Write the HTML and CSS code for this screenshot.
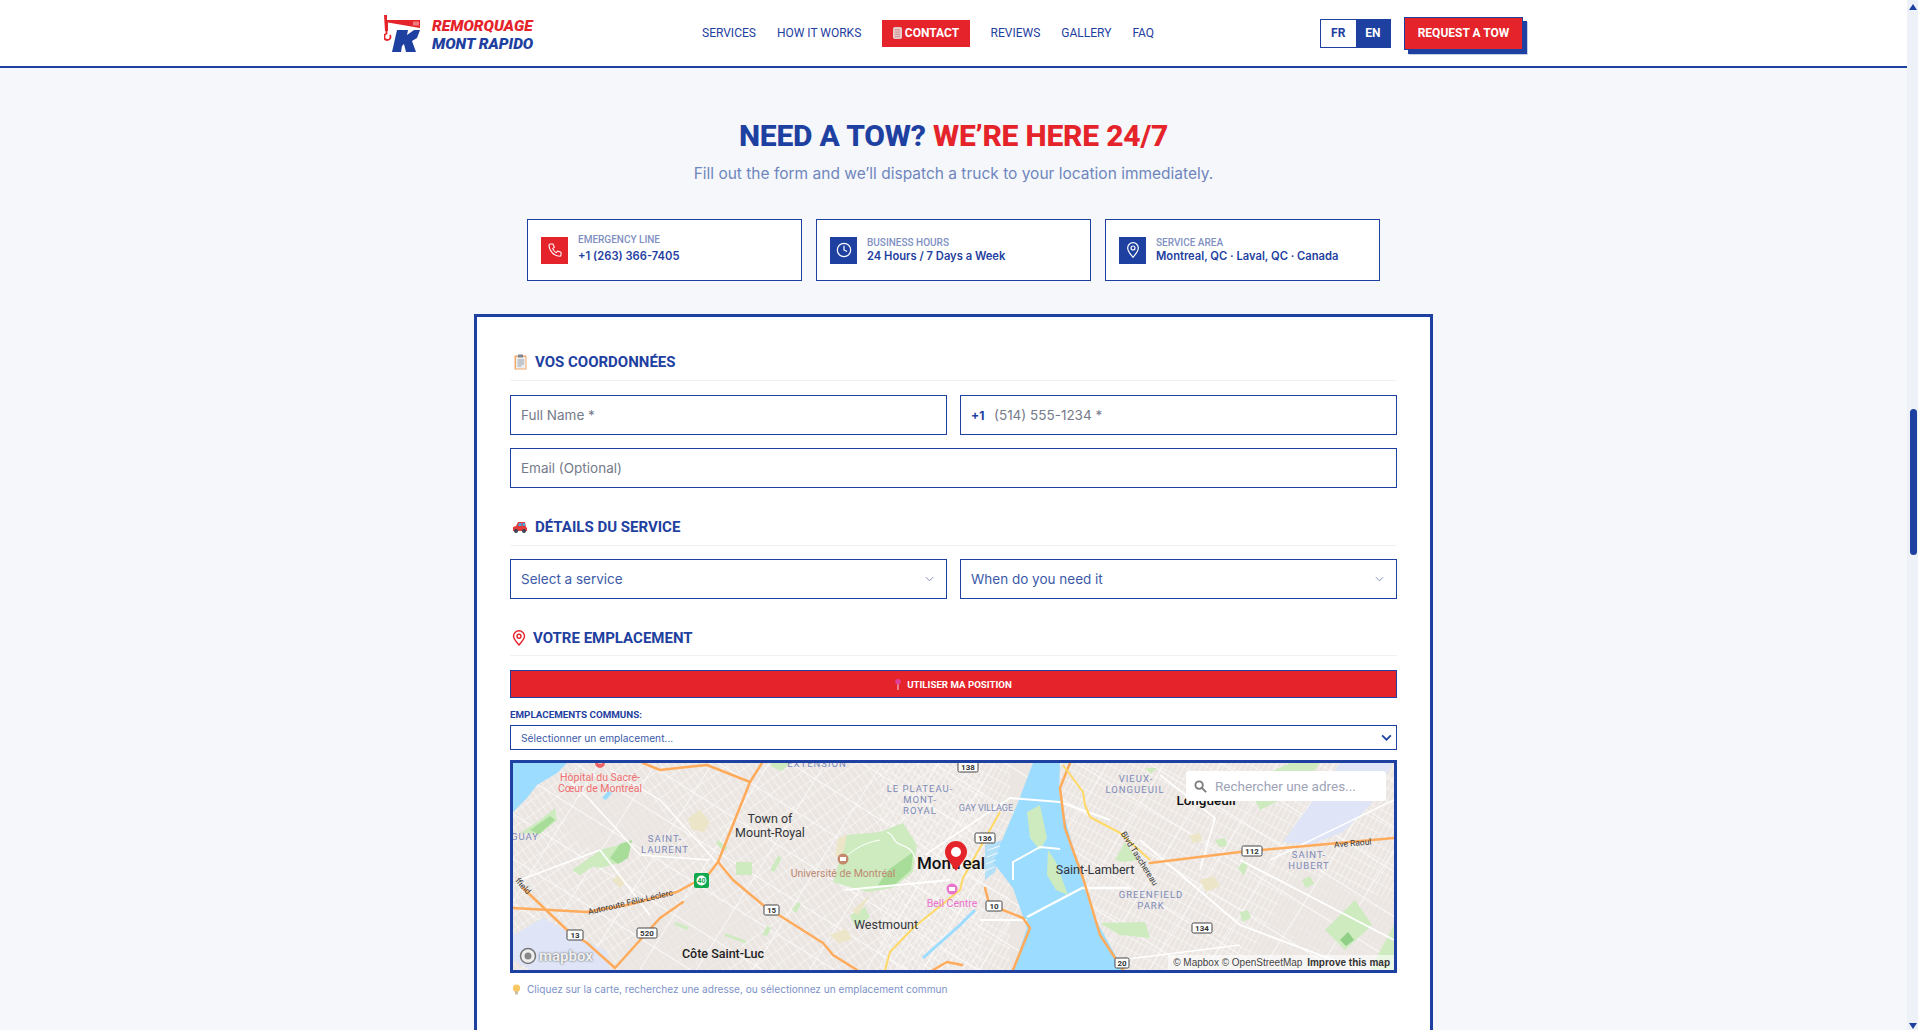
FILE: index.html
```html
<!DOCTYPE html>
<html lang="en">
<head>
    <meta charset="UTF-8">
    <title>Remorquage Mont Rapido</title>
    <link rel="stylesheet" href="styles.css">
</head>
<body>
<div class="page">
    <header class="header">
        <a class="logo">
            <svg class="logo-mark" viewBox="0 0 36 37">
                <path d="M0 0h3v5h33v8L4 7.500V16H1z" fill="#e5232a"/>
                <path d="M2.500 16v2.500c-3 1-3 6.500 .5 6.500s4-3 3-5" fill="none" stroke="#e5232a" stroke-width="1.800"/>
                <path d="M13 15H24L23 20L30 15H36L33 23L28 26L32 37H22L20 29L18 31L17 37H8z" fill="#1e40a0"/>
                <path d="M30 6.500v4M32 6.500v4M34 6.500v4" stroke="#fff" stroke-width="0.800"/>
            </svg>
            <span class="logo-text"><span class="logo-red">REMORQUAGE</span><span class="logo-blue">MONT RAPIDO</span></span>
        </a>
        <nav class="nav">
            <a>SERVICES</a>
            <a>HOW IT WORKS</a>
            <a class="nav-contact">
                <svg viewBox="0 0 10 13" width="9" height="12"><rect x="0.500" y="0.500" width="9" height="12" rx="1" fill="#f3c9c9" stroke="#ddd"/><path d="M2 3h6M2 5.500h6M2 8h6M2 10.500h6" stroke="#b88" stroke-width="1"/></svg>
                CONTACT
            </a>
            <a>REVIEWS</a>
            <a>GALLERY</a>
            <a>FAQ</a>
        </nav>
        <div class="lang">
            <span class="lang-fr">FR</span>
            <span class="lang-en">EN</span>
        </div>
        <a class="tow-btn">REQUEST A TOW</a>
    </header>

    <main class="main">
        <h1 class="title">NEED A TOW? <span>WE’RE HERE 24/7</span></h1>
        <p class="subtitle">Fill out the form and we’ll dispatch a truck to your location immediately.</p>

        <div class="info-row">
            <div class="info-card">
                <div class="info-icon red">
                    <svg viewBox="0 0 24 24" width="16" height="16" fill="none" stroke="#fff" stroke-width="1.600" stroke-linecap="round" stroke-linejoin="round"><path d="M5 3h4l2 5-2.500 2a12 12 0 0 0 5.500 6l2-2.500 5 2v4c0 1-1 2-2 2C11 21.500 3 13 3 5c0-1 1-2 2-2z"/></svg>
                </div>
                <div class="info-text info-text-high">
                    <span class="info-label">EMERGENCY LINE</span>
                    <span class="info-value">+1 (263) 366-7405</span>
                </div>
            </div>
            <div class="info-card">
                <div class="info-icon">
                    <svg viewBox="0 0 24 24" width="16" height="16" fill="none" stroke="#fff" stroke-width="1.800" stroke-linecap="round" stroke-linejoin="round"><circle cx="12" cy="12" r="10"/><path d="M12 6v6l4 2"/></svg>
                </div>
                <div class="info-text">
                    <span class="info-label">BUSINESS HOURS</span>
                    <span class="info-value">24 Hours / 7 Days a Week</span>
                </div>
            </div>
            <div class="info-card">
                <div class="info-icon">
                    <svg viewBox="0 0 24 24" width="16" height="16" fill="none" stroke="#fff" stroke-width="1.800" stroke-linejoin="round"><path d="M12 23c-4-5-8-9-8-14a8 8 0 0 1 16 0c0 5-4 9-8 14z"/><circle cx="12" cy="9" r="3"/></svg>
                </div>
                <div class="info-text">
                    <span class="info-label">SERVICE AREA</span>
                    <span class="info-value">Montreal, QC · Laval, QC · Canada</span>
                </div>
            </div>
        </div>

        <form class="form-card">
            <h2 class="section-head head-one">
                <svg class="head-icon" viewBox="0 0 13 16" width="13" height="16"><rect x="0.500" y="1.500" width="12" height="14" fill="#f3a868"/><rect x="2" y="3" width="9.500" height="11.500" fill="#eceef0"/><rect x="4" y="0.500" width="5" height="3" fill="#7d8590"/><path d="M3.500 6h6.500M3.500 8h6.500M3.500 10h6.500M3.500 12h4" stroke="#9aa1a8"/></svg>
                VOS COORDONNÉES
            </h2>
            <div class="row">
                <div class="field"><span class="ph">Full Name *</span></div>
                <div class="field"><span class="prefix">+1</span><span class="ph">(514) 555-1234 *</span></div>
            </div>
            <div class="field field-wide"><span class="ph">Email (Optional)</span></div>

            <h2 class="section-head head-two">
                <svg class="head-icon" viewBox="0 0 16 12" width="16" height="12"><path d="M1 6l3-1 2-4h7l1 5 1 1v3H1z" fill="#e03a3a"/><path d="M7 2h2.500v3H6zM10.500 2H13v3h-2.500z" fill="#4aa3df"/><circle cx="4" cy="10" r="2" fill="#39424e"/><circle cx="12" cy="10" r="2" fill="#39424e"/></svg>
                DÉTAILS DU SERVICE
            </h2>
            <div class="row">
                <div class="field field-select"><span class="val">Select a service</span><svg class="chev" viewBox="0 0 10 6" width="9" height="6"><path d="M1 1l4 4 4-4" fill="none" stroke="#6f80b0" stroke-width="1"/></svg></div>
                <div class="field field-select"><span class="val">When do you need it</span><svg class="chev" viewBox="0 0 10 6" width="9" height="6"><path d="M1 1l4 4 4-4" fill="none" stroke="#6f80b0" stroke-width="1"/></svg></div>
            </div>

            <h2 class="section-head head-three">
                <svg class="head-icon" viewBox="0 0 14 16" width="14" height="16" fill="none" stroke="#e5232a" stroke-width="1.400"><path d="M7 15C4 11.500 1.500 9 1.500 6.300a5.500 5.500 0 0 1 11 0C12.500 9 10 11.500 7 15z"/><circle cx="7" cy="6.200" r="2"/></svg>
                VOTRE EMPLACEMENT
            </h2>
            <button type="button" class="geo-btn">
                <svg viewBox="0 0 6 12" width="6" height="11"><path d="M3 5v7" stroke="#eeb4c8" stroke-width="1.400"/><circle cx="3" cy="3" r="3" fill="#e0409a"/></svg>
                UTILISER MA POSITION
            </button>
            <label class="common-label">EMPLACEMENTS COMMUNS:</label>
            <div class="common-select">
                <span>Sélectionner un emplacement...</span>
                <svg viewBox="0 0 12 8" width="11" height="7"><path d="M1 1.500l5 5 5-5" fill="none" stroke="#1e40a0" stroke-width="2"/></svg>
            </div>

            <div class="map">
                <svg class="map-art" viewBox="513 763 881 207" preserveAspectRatio="none">
                    <defs>
                        <pattern id="streetsA" width="6" height="12" patternUnits="userSpaceOnUse" patternTransform="rotate(-35)">
                            <path d="M0 0H6M0 0V12" stroke="#fff" stroke-width="0.900" fill="none"/>
                        </pattern>
                        <pattern id="streetsB" width="5" height="11" patternUnits="userSpaceOnUse" patternTransform="rotate(28)">
                            <path d="M0 0H5M0 0V11" stroke="#fff" stroke-width="0.900" fill="none"/>
                        </pattern>
                        <pattern id="arteries" width="48" height="38" patternUnits="userSpaceOnUse" patternTransform="rotate(32)">
                            <path d="M0 0H48M0 0V38" stroke="#fff" stroke-width="1.300" fill="none"/>
                        </pattern>
                    </defs>
                    <!-- land -->
                    <rect x="513" y="763" width="881" height="207" fill="#ebe6e2"/>
                    <rect x="513" y="763" width="470" height="207" fill="url(#streetsA)"/>
                    <rect x="1060" y="763" width="334" height="207" fill="url(#streetsB)"/>
                    <rect x="880" y="763" width="130" height="207" fill="url(#streetsB)"/>
                    <path d="M640 925L700 890L760 925L720 970H610zM560 800L640 790L680 830L620 860L570 840zM1300 870L1394 900V970H1240z" fill="#ebe6e2" opacity="0.600"/>
                    <rect x="513" y="763" width="881" height="207" fill="url(#arteries)"/>

                    <!-- airports -->
                    <path d="M513 960V935L543 918L607 952L610 970H530z" fill="#dfe5f6"/>
                    <path d="M1283 842L1340 763H1393L1370 805L1343 832L1310 845z" fill="#dfe5f6"/>

                    <!-- water -->
                    <g fill="#9bdcff">
                        <path d="M513 763H567L557 773L537 785L527 798L513 812z"/>
                        <path d="M1033 763H1060L1059 790L1066 822L1080 872L1093 915L1117 958L1124 970H1013L1027 928L1013 888L993 862L1003 838L1017 805z"/>
                        <path d="M985 845L1003 840L995 872L985 880z" opacity="0.700"/>
                        <path d="M1037 940l6 0 0 7-6 0z"/>
                        <path d="M602 798l6-7 4 2-6 7z"/>
                        <path d="M617 847h12v5h-12z"/>
                    </g>
                    <path d="M923 958L960 925L975 910" fill="none" stroke="#9bdcff" stroke-width="3"/>
                    <path d="M988 850l12-4M987 857l11-4M986 864l10-4M985 871l9-4" fill="none" stroke="#fff" stroke-width="0.800"/>

                    <!-- parks -->
                    <g fill="#cdebbf">
                        <path d="M833 882L847 835L880 832L903 823L917 845L913 872L893 888L867 892z"/>
                        <path d="M1027 812L1040 805L1047 838L1040 850L1030 838z"/>
                        <path d="M1048 850L1056 862L1068 895L1056 890L1047 875z"/>
                        <path d="M520 833L540 820L555 808L557 820L540 834z"/>
                        <path d="M585 865L600 850L630 842L622 862L600 868z"/>
                        <path d="M572 870L598 852L600 862L580 875z"/>
                        <path d="M1115 860L1125 842L1138 860L1125 862z"/>
                        <path d="M1100 923L1145 922L1150 938L1120 935z"/>
                        <path d="M1325 930L1355 900L1372 925L1345 950z"/>
                        <path d="M1370 970L1394 925V970z"/>
                        <path d="M1245 780L1275 770L1290 763H1320L1300 790L1260 810z"/>
                        <path d="M1215 840l10-2 2 8-8 1zM1238 868l6-8 4 4-4 12zM1302 880l8-4 4 8-8 4zM1240 912l8-2 3 8-9 4z"/>
                        <path d="M736 862h16v13h-16zM770 870l8-14 4 2-8 14zM792 910l6-8 3 2-5 9zM762 935l5-9 4 2-4 8zM725 933l22 8-2 2-20-7zM675 922l14 5-2 3-12-5z"/>
                        <path d="M718 840l10 8-4 3-8-7zM850 915l15-8 5 10-15 10zM866 882l20-6-4 10-10 6z"/>
                        <path d="M770 763h20l-8 8-10-4zM1145 768h12l-6 6z"/>
                    </g>
                    <g fill="#a7dd98">
                        <path d="M878 885L888 870L905 858L913 852L911 870L893 886z"/>
                        <path d="M610 858l10-14 12-4-4 18-10 6z"/>
                        <path d="M530 830l20-14 5 4-16 14z"/>
                        <path d="M1340 940l8-8 6 8-8 6z" fill="#8fcf86"/>
                    </g>
                    <g fill="#ece5c8">
                        <path d="M688 818l12-8 10 12-6 10-12-2zM612 880l8-6 6 8-6 6zM830 935l16-6 6 10-14 4zM1200 880l14-4 6 10-14 6zM870 895l-12 20-6-4zM1190 835l10-2 2 8-10 2zM838 838l9-3-4 20-8 2z"/>
                    </g>

                    <!-- mont-royal ridge -->
                    <path d="M887 832c8 3 4 8 12 12s14 2 18 22" fill="none" stroke="#fff" stroke-width="1.200"/>
                    <path d="M840 860c10-6 18-16 40-20" fill="none" stroke="#fff" stroke-width="1"/>

                    <!-- big white roads -->
                    <g fill="none" stroke="#fff" stroke-linejoin="round">
                        <path d="M1010 798L1060 802L1110 820" stroke-width="2"/>
                        <path d="M1013 880V862L1040 847L1060 849" stroke-width="2"/>
                        <path d="M1027 917L1082 888H1130" stroke-width="2.500"/>
                        <path d="M980 920H1027" stroke-width="2"/>
                        <path d="M925 855L1010 798" stroke-width="1.600"/>
                        <path d="M710 860L640 855L590 800L560 772" stroke-width="1.600"/>
                        <path d="M1140 840L1240 925L1360 970" stroke-width="1.800"/>
                        <path d="M1240 860L1394 940" stroke-width="1.800"/>
                        <path d="M1160 775L1215 818L1200 870" stroke-width="1.600"/>
                        <path d="M1270 860L1394 800" stroke-width="1.400"/>
                        <path d="M1120 960L1240 945" stroke-width="1.400"/>
                        <path d="M733 880L660 800L610 770" stroke-width="1.400"/>
                        <path d="M845 890L950 880" stroke-width="1.800"/>
                        <path d="M520 880L600 850L650 915" stroke-width="1.600"/>
                    </g>

                    <!-- highways -->
                    <g fill="none" stroke="#ffab5c" stroke-width="2.500" stroke-linejoin="round" stroke-linecap="round">
                        <path d="M643 763L660 770L687 767L707 765L750 782"/>
                        <path d="M762 763L750 782L718 862"/>
                        <path d="M513 908L587 912L627 905L677 892L708 875L718 862"/>
                        <path d="M718 862L733 880L763 905L823 943L833 955L857 970"/>
                        <path d="M523 888L567 930L587 943L615 968"/>
                        <path d="M615 968L660 918L683 902"/>
                        <path d="M1070 763L1060 788L1065 828L1083 878L1100 935L1123 970"/>
                        <path d="M1150 863L1240 852L1395 838"/>
                        <path d="M985 888L990 907L1003 910L1023 918L1030 928L1013 970"/>
                        <path d="M933 970L947 962L962 965"/>
                    </g>
                    <g fill="none" stroke="#ffd966" stroke-width="2" stroke-linejoin="round">
                        <path d="M1063 765L1083 792L1085 805L1090 817L1120 833L1150 860"/>
                        <path d="M1000 812L963 878L960 890L913 928L890 952L885 970"/>
                    </g>

                    <!-- place labels -->
                    <g font-family="Roboto, sans-serif" text-anchor="middle">
                        <g font-size="10.500" fill="#ef6f70">
                            <text x="600" y="781">Hôpital du Sacré-</text>
                            <text x="600" y="792">Cœur de Montréal</text>
                        </g>
                        <g font-size="9.500" fill="#7e8ab8" letter-spacing="1">
                            <text x="817" y="767">EXTENSION</text>
                            <text x="920" y="792">LE PLATEAU-</text>
                            <text x="920" y="803">MONT-</text>
                            <text x="920" y="814">ROYAL</text>
                            <text x="665" y="842">SAINT-</text>
                            <text x="665" y="853">LAURENT</text>
                            <text x="525" y="840">GUAY</text>
                            <text x="1136" y="782">VIEUX-</text>
                            <text x="1135" y="793">LONGUEUIL</text>
                            <text x="1151" y="898">GREENFIELD</text>
                            <text x="1151" y="909">PARK</text>
                            <text x="1309" y="858">SAINT-</text>
                            <text x="1309" y="869">HUBERT</text>
                        </g>
                        <text x="986" y="811" font-size="9" fill="#7e8ab8">GAY VILLAGE</text>
                        <g font-size="12.500" fill="#33363b">
                            <text x="770" y="823">Town of</text>
                            <text x="770" y="837">Mount-Royal</text>
                            <text x="886" y="929">Westmount</text>
                            <text x="1095" y="874">Saint-Lambert</text>
                        </g>
                        <text x="723" y="958" font-size="12.500" font-weight="500" fill="#222">Côte Saint-Luc</text>
                        <text x="1206" y="805" font-size="13.500" font-weight="500" fill="#111">Longueuil</text>
                        <text x="951" y="869" font-size="17" font-weight="500" fill="#111">Montreal</text>
                        <text x="843" y="877" font-size="10.500" fill="#bd8a72">Université de Montréal</text>
                        <text x="952" y="907" font-size="10.500" fill="#ec73cd">Bell Centre</text>
                        <g font-size="8.500" fill="#3a3a3a">
                            <text transform="translate(631 905) rotate(-13)">Autoroute Félix-Leclerc</text>
                            <text transform="translate(521 888) rotate(48)">ffield</text>
                            <text transform="translate(1137 860) rotate(58)">Blvd Taschereau</text>
                            <text transform="translate(1353 846) rotate(-5)">Ave Raoul</text>
                        </g>
                    </g>

                    <!-- poi dots -->
                    <circle cx="600" cy="763" r="5" fill="#ee6466"/>
                    <path d="M598 762h4v1.500h-4z" fill="#fff"/>
                    <circle cx="843" cy="859" r="5.500" fill="#c58a6d"/>
                    <path d="M840 857h6v4h-6z" fill="#fff"/>
                    <circle cx="952" cy="889" r="5.500" fill="#ea74cc"/>
                    <path d="M949 887h6v4h-6z" fill="#fff"/>

                    <!-- road shields -->
                    <g font-family="Roboto, sans-serif" font-size="8" font-weight="700" text-anchor="middle" fill="#333">
                        <g stroke="#444" fill="#fff" stroke-width="1">
                            <rect x="567" y="930" width="16" height="10" rx="1.500"/>
                            <rect x="637" y="928" width="20" height="10" rx="1.500"/>
                            <rect x="764" y="905" width="15" height="10" rx="1.500"/>
                            <rect x="958" y="762" width="20" height="10" rx="1.500"/>
                            <rect x="975" y="833" width="20" height="10" rx="1.500"/>
                            <rect x="986" y="901" width="16" height="10" rx="1.500"/>
                            <rect x="1192" y="923" width="20" height="10" rx="1.500"/>
                            <rect x="1242" y="846" width="20" height="10" rx="1.500"/>
                            <rect x="1115" y="958" width="14" height="10" rx="1.500"/>
                        </g>
                        <text x="575" y="938">13</text>
                        <text x="647" y="936">520</text>
                        <text x="771.500" y="913">15</text>
                        <text x="968" y="770">138</text>
                        <text x="985" y="841">136</text>
                        <text x="994" y="909">10</text>
                        <text x="1202" y="931">134</text>
                        <text x="1252" y="854">112</text>
                        <text x="1122" y="966">20</text>
                        <rect x="694" y="873" width="15" height="15" rx="2" fill="#12a84e"/>
                        <circle cx="701.500" cy="880.500" r="5" fill="#fff"/>
                        <text x="701.500" y="883" font-size="7" fill="#12a84e">40</text>
                    </g>
                </svg>

                <div class="map-search">
                    <svg viewBox="0 0 14 14" width="13" height="13" fill="none" stroke="#7b7b7b" stroke-width="2"><circle cx="5.500" cy="5.500" r="4"/><path d="M8.500 8.500L13 13"/></svg>
                    <span>Rechercher une adres...</span>
                </div>

                <svg class="map-pin" viewBox="0 0 22 30" width="22" height="30">
                    <path d="M11 30C6 22 0 17 0 11a11 11 0 0 1 22 0c0 6-6 11-11 19z" fill="#e5232a"/>
                    <circle cx="11" cy="11" r="5" fill="#fff"/>
                </svg>

                <div class="map-logo">
                    <svg viewBox="0 0 18 18" width="18" height="18"><circle cx="9" cy="9" r="7.500" fill="#eee" stroke="#777" stroke-width="1.500"/><circle cx="9" cy="9" r="3.500" fill="#888"/></svg>
                    <span>mapbox</span>
                </div>
                <div class="map-attrib">© Mapbox © OpenStreetMap <b>Improve this map</b></div>
            </div>

            <p class="map-hint">
                <svg viewBox="0 0 10 12" width="9" height="11"><circle cx="5" cy="4.500" r="4" fill="#f7c766"/><rect x="3.500" y="8" width="3" height="3.500" fill="#c8b79a"/></svg>
                Cliquez sur la carte, recherchez une adresse, ou sélectionnez un emplacement commun
            </p>
        </form>
    </main>
</div>
<div class="scrollbar">
    <span class="arrow-up"></span>
    <span class="thumb"></span>
    <span class="arrow-down"></span>
</div>
</body>
</html>
```

FILE: styles.css
```css
* {
    box-sizing: border-box;
}
html, body {
    margin: 0;
    height: 1030px;
    overflow: hidden;
}
body {
    display: flex;
    font-family: "Inter", sans-serif;
    background-color: #f5f7fb;
    color: #1e40a0;
}
.page {
    flex: 1;
    min-width: 0;
    height: 1030px;
    overflow: hidden;
}
.scrollbar {
    width: 11px;
    background-color: #eef1f7;
    display: flex;
    flex-direction: column;
    align-items: center;
    position: relative;
}
.arrow-up {
    margin-top: 4px;
    margin-left: 1px;
    border: 4px solid transparent;
    border-top: 0;
    border-bottom: 6px solid #1e40a0;
}
.arrow-down {
    position: absolute;
    bottom: 1px;
    left: 2px;
    border: 4px solid transparent;
    border-bottom: 0;
    border-top: 6px solid #1e40a0;
}
.thumb {
    position: absolute;
    top: 409px;
    left: 3px;
    width: 7px;
    height: 146px;
    background-color: #1e40a0;
    border-radius: 4px;
}

/* header */
.header {
    height: 68px;
    background-color: #fff;
    border-bottom: 2px solid #1e40a0;
    display: flex;
    align-items: center;
    padding-left: 384px;
}
.logo {
    display: flex;
    align-items: center;
    gap: 12px;
    width: 318px;
}
.logo-mark {
    width: 36px;
    height: 37px;
}
.logo-text {
    display: flex;
    flex-direction: column;
    margin-top: 3px;
    font-family: "Roboto", sans-serif;
    font-size: 15.5px;
    font-weight: 900;
    font-style: italic;
    line-height: 18px;
}
.logo-red {
    color: #e5232a;
}
.logo-blue {
    color: #1e40a0;
}
.nav {
    display: flex;
    align-items: center;
    gap: 21px;
    width: 618px;
    font-family: "Roboto", sans-serif;
    font-size: 12px;
    font-weight: 400;
}
.nav-contact {
    display: flex;
    align-items: center;
    gap: 3px;
    height: 27px;
    padding: 0 10.5px;
    background-color: #e5232a;
    color: #fff;
    font-weight: 700;
}
.lang {
    display: flex;
    width: 71px;
    height: 29px;
    border: 1px solid #1e40a0;
    font-family: "Roboto", sans-serif;
    font-size: 12px;
    font-weight: 700;
}
.lang span {
    flex: 1;
    display: flex;
    align-items: center;
    justify-content: center;
}
.lang-en {
    background-color: #1e40a0;
    color: #fff;
}
.tow-btn {
    margin-left: 13px;
    width: 119px;
    height: 33px;
    display: flex;
    align-items: center;
    justify-content: center;
    background-color: #e5232a;
    border: 1px solid #1e40a0;
    box-shadow: 4px 4px 0 #1e40a0, 5px 5px 0 #c5cfe6;
    color: #fff;
    font-family: "Roboto", sans-serif;
    font-size: 12px;
    font-weight: 700;
}

/* main */
.main {
    display: flex;
    flex-direction: column;
    align-items: center;
}
.title {
    margin: 40px 0 0;
    font-family: "Roboto", sans-serif;
    font-size: 30px;
    line-height: 56px;
    font-weight: 800;
    letter-spacing: -0.2px;
    color: #1e40a0;
}
.title span {
    color: #e5232a;
}
.subtitle {
    margin: 0;
    font-size: 15.5px;
    line-height: 20px;
    color: #6f86bd;
}
.info-row {
    display: flex;
    gap: 14px;
    margin-top: 35px;
}
.info-card {
    width: 275px;
    height: 62px;
    background-color: #fff;
    border: 1px solid #1e40a0;
    display: flex;
    align-items: center;
    gap: 10px;
    padding-left: 13px;
}
.info-icon {
    width: 27px;
    height: 27px;
    background-color: #1e40a0;
    display: flex;
    align-items: center;
    justify-content: center;
}
.info-icon.red {
    background-color: #e5232a;
}
.info-text {
    display: flex;
    flex-direction: column;
    padding-bottom: 1px;
}
.info-text-high {
    padding-bottom: 4px;
}
.info-text-high .info-value {
    margin-top: 3px;
}
.info-label {
    font-family: "Roboto", sans-serif;
    font-size: 10px;
    font-weight: 500;
    line-height: 13px;
    color: #7f90c2;
}
.info-value {
    font-size: 11.2px;
    line-height: 15px;
    font-weight: 600;
    color: #1e40a0;
}

/* form */
.form-card {
    width: 959px;
    height: 800px;
    margin-top: 33px;
    padding: 33px 33px 0;
    background-color: #fff;
    border: 3px solid #1e40a0;
}
.section-head {
    display: flex;
    align-items: center;
    margin: 0 0 14px;
    height: 31px;
    padding-bottom: 7px;
    border-bottom: 1px solid #f0f1f4;
    font-family: "Roboto", sans-serif;
    font-size: 15px;
    font-weight: 700;
    color: #1e40a0;
}
.head-icon {
    flex: none;
}
.head-one {
    gap: 8px;
    padding-left: 4px;
}
.head-two {
    gap: 7px;
    padding-left: 2px;
    margin-top: 27px;
    margin-bottom: 13px;
}
.head-three {
    gap: 7px;
    padding-left: 2px;
    padding-bottom: 5px;
    margin-top: 26px;
}
.row {
    display: flex;
    gap: 13px;
    margin-bottom: 13px;
}
.field {
    flex: 1;
    height: 40px;
    display: flex;
    align-items: center;
    padding: 0 10px;
    background-color: #fff;
    border: 1px solid #1e40a0;
    font-size: 13.5px;
}
.field-wide {
    flex: none;
}
.ph {
    color: #747a8a;
}
.prefix {
    width: 23px;
    font-size: 12px;
    font-weight: 700;
}
.val {
    color: #3c5aa8;
}
.field-select {
    justify-content: space-between;
    padding-right: 12px;
}
.geo-btn {
    width: 100%;
    height: 28px;
    display: flex;
    align-items: center;
    justify-content: center;
    gap: 6px;
    padding: 0;
    background-color: #e5232a;
    border: 1px solid #1e40a0;
    color: #fff;
    font-family: "Roboto", sans-serif;
    font-size: 9.7px;
    font-weight: 700;
}
.common-label {
    display: block;
    margin-top: 11px;
    font-family: "Roboto", sans-serif;
    font-size: 9.8px;
    line-height: 12px;
    font-weight: 700;
}
.common-select {
    height: 25px;
    margin-top: 4px;
    display: flex;
    align-items: center;
    justify-content: space-between;
    padding: 0 4px 0 10px;
    border: 1px solid #1e40a0;
    font-size: 10.2px;
    color: #3c5aa8;
}

/* map */
.map {
    position: relative;
    height: 213px;
    margin-top: 10px;
    border: 3px solid #1e40a0;
    overflow: hidden;
}
.map-art {
    display: block;
    width: 100%;
    height: 100%;
}
.map-search {
    position: absolute;
    top: 8px;
    right: 8px;
    width: 200px;
    height: 30px;
    display: flex;
    align-items: center;
    gap: 8px;
    padding-left: 8px;
    background-color: #fff;
    border-radius: 3px;
    font-family: "Roboto", sans-serif;
    font-size: 13.5px;
    color: #9ea3b8;
}
.map-pin {
    position: absolute;
    top: 78px;
    left: 432px;
}
.map-logo {
    position: absolute;
    left: 6px;
    bottom: 5px;
    display: flex;
    align-items: center;
    gap: 2px;
    font-family: "Roboto", sans-serif;
    font-size: 15px;
    font-weight: 700;
    color: #f0f0f0;
    text-shadow: 0 0 2px rgba(0, 0, 0, 0.7);
}
.map-attrib {
    position: absolute;
    right: 0;
    bottom: 0;
    padding: 2px 4px 2px 5px;
    background-color: rgba(255, 255, 255, 0.6);
    font-family: "Liberation Sans", sans-serif;
    font-size: 10px;
    color: #444;
}
.map-attrib b {
    margin-left: 2px;
    font-weight: 700;
    color: #333;
}
.map-hint {
    display: flex;
    align-items: center;
    gap: 6px;
    margin: 10px 0 0 2px;
    font-size: 10.1px;
    color: #7d92c8;
}
```
